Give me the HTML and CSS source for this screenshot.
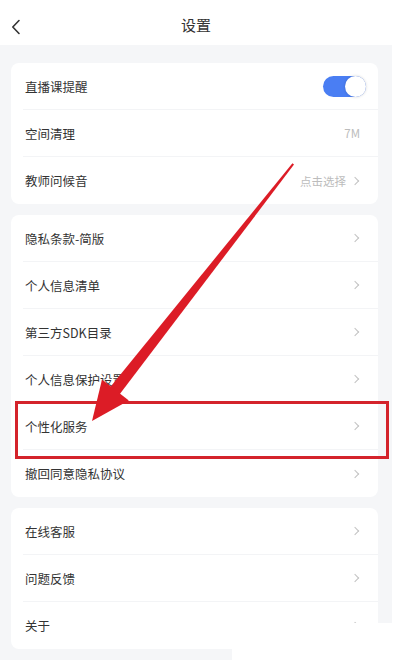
FILE: index.html
```html
<!DOCTYPE html>
<html lang="zh-CN">

<head>
  <meta charset="UTF-8">
  <meta name="viewport" content="width=device-width, initial-scale=1.0">
  <title>设置</title>
  <link rel="stylesheet" href="styles.css">
</head>

<body>
  <div class="page">
    <header class="topbar">
      <a class="back" href="#">
        <svg width="10" height="16" viewBox="0 0 10 16"><polyline points="8,1.5 1.8,8 8,14.5" fill="none" stroke="#333" stroke-width="1.6" stroke-linecap="round" stroke-linejoin="round"/></svg>
      </a>
      <h1>设置</h1>
    </header>

    <main>
      <div class="card">
        <div class="row">
          <span>直播课提醒</span>
          <span class="switch"><span class="knob"></span></span>
        </div>
        <div class="row">
          <span>空间清理</span>
          <span class="value">7M</span>
        </div>
        <div class="row">
          <span>教师问候音</span>
          <span class="value">点击选择<i class="chev"></i></span>
        </div>
      </div>

      <div class="card">
        <div class="row"><span>隐私条款-简版</span><i class="chev"></i></div>
        <div class="row"><span>个人信息清单</span><i class="chev"></i></div>
        <div class="row"><span>第三方SDK目录</span><i class="chev"></i></div>
        <div class="row"><span>个人信息保护设置</span><i class="chev"></i></div>
        <div class="row"><span>个性化服务</span><i class="chev"></i></div>
        <div class="row"><span>撤回同意隐私协议</span><i class="chev"></i></div>
      </div>

      <div class="card">
        <div class="row"><span>在线客服</span><i class="chev"></i></div>
        <div class="row"><span>问题反馈</span><i class="chev"></i></div>
        <div class="row"><span>关于</span><i class="chev"></i></div>
      </div>
    </main>

    <!-- annotation drawn over the screenshot -->
    <div class="highlight"></div>
    <svg class="arrow" width="392" height="660" viewBox="0 0 392 660">
      <polygon points="294,164.6 292.4,163.2 109.5,387.9 118.9,395.3" fill="#dc1c26"/>
      <polygon points="92,421 102,379.5 128.8,400.5" fill="#dc1c26"/>
    </svg>
    <div class="cover"></div>
  </div>
</body>

</html>
```

FILE: styles.css
```css
body {
  margin: 0;
  background-color: #fff;
  font-family: "Noto Sans CJK SC", "Noto Sans", sans-serif;
  color: #333;
}

.page {
  position: relative;
  width: 392px;
  height: 660px;
  background-color: #f5f6f8;
  overflow: hidden;
}

.topbar {
  height: 45px;
  background-color: #fff;
  display: flex;
  align-items: center;
  justify-content: center;
  position: relative;
}

.topbar h1 {
  margin: 0;
  font-size: 15px;
  font-weight: normal;
  color: #333;
  padding-top: 4px;
}

.back {
  position: absolute;
  left: 11px;
  top: 19px;
  display: flex;
}

main {
  padding: 18px 14px 0 11px;
  display: flex;
  flex-direction: column;
  gap: 11px;
}

.card {
  background-color: #fff;
  border-radius: 8px;
}

.row {
  height: 47px;
  margin-left: 12px;
  padding: 0 18px 0 2px;
  display: flex;
  align-items: center;
  justify-content: space-between;
  font-size: 12.5px;
  border-bottom: 1px solid #f3f4f6;
  box-sizing: border-box;
}

.row:last-child {
  border-bottom: none;
}

.value {
  color: #bcbcbc;
  font-size: 11.5px;
  display: flex;
  align-items: center;
  gap: 6px;
}

.chev {
  width: 5px;
  height: 5px;
  border-top: 1.3px solid #c2c2c2;
  border-right: 1.3px solid #c2c2c2;
  transform: rotate(45deg);
  margin-right: 2px;
}

.switch {
  width: 43px;
  height: 21px;
  border-radius: 11px;
  background-color: #4a7ef3;
  position: relative;
  margin-right: -6px;
}

.knob {
  position: absolute;
  right: 0;
  top: 0;
  width: 21px;
  height: 21px;
  border-radius: 50%;
  background-color: #fff;
  box-shadow: 0 0 3px rgba(0, 0, 0, 0.18);
}

.highlight {
  position: absolute;
  left: 15px;
  top: 401px;
  width: 374px;
  height: 58px;
  border: 3px solid #d4232b;
  box-sizing: border-box;
}

.arrow {
  position: absolute;
  left: 0;
  top: 0;
}

.cover {
  position: absolute;
  left: 232px;
  top: 623px;
  right: 0;
  bottom: 0;
  background-color: #fff;
}
```
